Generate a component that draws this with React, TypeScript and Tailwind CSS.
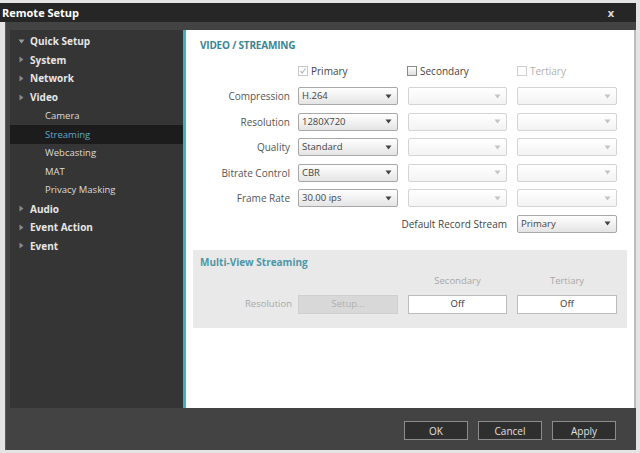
import React from "react";

const font = { fontFamily: '"Open Sans", "DejaVu Sans", sans-serif' };

function Arrow({ down }: { down?: boolean }) {
  return (
    <svg width="7" height="7" viewBox="0 0 7 7" className="shrink-0">
      {down ? <path d="M0.5 1.5 L6.5 1.5 L3.5 5.5 Z" fill="#9a9a9a" /> : <path d="M1.5 0.5 L5.5 3.5 L1.5 6.5 Z" fill="#8a8a8a" />}
    </svg>
  );
}

function Select({ value, disabled }: { value?: string; disabled?: boolean }) {
  return (
    <div
      className={`flex items-center justify-between h-[18px] rounded-[2px] border px-[3px] ${
        disabled ? "border-[#d4d4d4] bg-gradient-to-b from-white to-[#f3f3f3]" : "border-[#a8a8a8] bg-gradient-to-b from-white to-[#e4e4e4]"
      }`}
    >
      <span className="text-[9.5px] text-[#444] leading-none">{value}</span>
      <svg width="7" height="5" viewBox="0 0 7 5" className="mr-[2px]">
        <path d="M0.5 0.5 L6.5 0.5 L3.5 4.5 Z" fill={disabled ? "#c4c4c4" : "#444"} />
      </svg>
    </div>
  );
}

function Check({ label, checked, faded }: { label: string; checked?: boolean; faded?: boolean }) {
  return (
    <div className="flex items-center gap-[3px]">
      <div className={`w-[10px] h-[10px] border flex items-center justify-center ${faded ? "border-[#cfcfcf]" : checked ? "border-[#c8c8c8]" : "border-[#8a8a8a] bg-gradient-to-b from-white to-[#ddd]"}`}>
        {checked && (
          <svg width="8" height="8" viewBox="0 0 8 8">
            <path d="M1.5 4 L3.2 6 L6.5 1.5" stroke="#b8b8b8" strokeWidth="1.2" fill="none" />
          </svg>
        )}
      </div>
      <span className={`text-[10px] leading-none ${faded ? "text-[#b0b0b0]" : "text-[#444]"}`}>{label}</span>
    </div>
  );
}

function Row({ label, value }: { label: string; value: string }) {
  return (
    <div className="flex items-center h-[18px]">
      <div className="w-[96px] text-right text-[10px] text-[#555] leading-none">{label}</div>
      <div className="w-[100px] ml-[8px]"><Select value={value} /></div>
      <div className="w-[99px] ml-[10px]"><Select disabled /></div>
      <div className="w-[100px] ml-[10px]"><Select disabled /></div>
    </div>
  );
}

const nav: { label: string; kind: "top" | "sub"; down?: boolean; sel?: boolean }[] = [
  { label: "Quick Setup", kind: "top", down: true },
  { label: "System", kind: "top" },
  { label: "Network", kind: "top" },
  { label: "Video", kind: "top" },
  { label: "Camera", kind: "sub" },
  { label: "Streaming", kind: "sub", sel: true },
  { label: "Webcasting", kind: "sub" },
  { label: "MAT", kind: "sub" },
  { label: "Privacy Masking", kind: "sub" },
  { label: "Audio", kind: "top" },
  { label: "Event Action", kind: "top" },
  { label: "Event", kind: "top" },
];

function DarkButton({ label }: { label: string }) {
  return (
    <div className="w-[64px] h-[19px] flex items-center justify-center bg-[#2f2f2f] border border-[#8c8c8c] text-[10px] text-[#e0e0e0] leading-none">
      {label}
    </div>
  );
}

export default function App() {
  return (
    <div className="w-[640px] h-[453px] bg-[#e4e4e4] flex flex-col pt-[3px] pb-[3px] pr-[4px] overflow-hidden" style={font}>
      <div className="h-[19px] bg-[#262626] flex items-center justify-between pl-[2px] pr-[22px] shrink-0">
        <span className="text-[11px] font-bold text-white leading-none">Remote Setup</span>
        <span className="text-[11px] font-bold text-[#ddd] leading-none">x</span>
      </div>
      <div className="flex-1 ml-[5px] bg-[#434343] flex flex-col border-l border-[#5a5a5a]">
        <div className="flex mt-[8px] ml-[4px] h-[378px]">
          <div className="w-[173px] bg-[#353535] pt-[2px]">
            {nav.map((n) =>
              n.kind === "top" ? (
                <div key={n.label} className="h-[18.6px] flex items-center pl-[8px] gap-[5px]">
                  <Arrow down={n.down} />
                  <span className="text-[10px] font-bold text-[#e6e6e6] leading-none">{n.label}</span>
                </div>
              ) : (
                <div key={n.label} className={`h-[18.6px] flex items-center pl-[35px] ${n.sel ? "bg-[#1c1c1c]" : ""}`}>
                  <span className={`text-[9.5px] leading-none ${n.sel ? "text-[#5fa9c8]" : "text-[#dcdcdc]"}`}>{n.label}</span>
                </div>
              )
            )}
          </div>
          <div className="w-[3px] bg-[#45aebb]" />
          <div className="flex-1 bg-white border-r-2 border-[#bdbdbd] flex flex-col">
            <div className="pl-[14px] pt-[10px] text-[10px] font-bold text-[#3c8595] leading-none h-[16px] tracking-[-0.2px]">VIDEO / STREAMING</div>
            <div className="flex items-center h-[12px] mt-[19px]">
              <div className="w-[112px]" />
              <div className="w-[109px]"><Check label="Primary" checked /></div>
              <div className="w-[110px]"><Check label="Secondary" /></div>
              <Check label="Tertiary" faded />
            </div>
            <div className="flex flex-col gap-[7.5px] mt-[10px] pl-[8px]">
              <Row label="Compression" value="H.264" />
              <Row label="Resolution" value="1280X720" />
              <Row label="Quality" value="Standard" />
              <Row label="Bitrate Control" value="CBR" />
              <Row label="Frame Rate" value="30.00 ips" />
              <div className="flex items-center h-[18px]">
                <div className="w-[313px] text-right text-[10px] text-[#444] leading-none">Default Record Stream</div>
                <div className="w-[100px] ml-[10px]"><Select value="Primary" /></div>
              </div>
            </div>
            <div className="mx-[7px] mt-[17px] h-[78px] bg-[#e9e9e9] flex flex-col">
              <div className="pl-[7px] pt-[6px] text-[10px] font-bold text-[#4d97a6] leading-none h-[18px] flex items-center">Multi-View Streaming</div>
              <div className="flex mt-[7px] h-[12px] items-center text-[9.5px] text-[#a8a8a8] leading-none">
                <div className="w-[215px]" />
                <div className="w-[99px] text-center">Secondary</div>
                <div className="w-[100px] ml-[10px] text-center">Tertiary</div>
              </div>
              <div className="flex items-center mt-[8px] h-[19px]">
                <div className="w-[99px] text-right text-[9.5px] text-[#a8a8a8] leading-none">Resolution</div>
                <div className="w-[100px] ml-[6px] h-[19px] bg-[#d8d8d8] border border-[#cfcfcf] flex items-center justify-center text-[9.5px] text-[#b0b0b0] leading-none">Setup...</div>
                <div className="w-[99px] ml-[10px] h-[19px] bg-white border border-[#bcbcbc] flex items-center justify-center text-[9.5px] text-[#333] leading-none">Off</div>
                <div className="w-[100px] ml-[10px] h-[19px] bg-white border border-[#bcbcbc] flex items-center justify-center text-[9.5px] text-[#333] leading-none">Off</div>
              </div>
            </div>
          </div>
        </div>
        <div className="flex-1 flex items-center justify-end gap-[10px] pr-[20px] pt-[3px]">
          <DarkButton label="OK" />
          <DarkButton label="Cancel" />
          <DarkButton label="Apply" />
        </div>
      </div>
    </div>
  );
}
